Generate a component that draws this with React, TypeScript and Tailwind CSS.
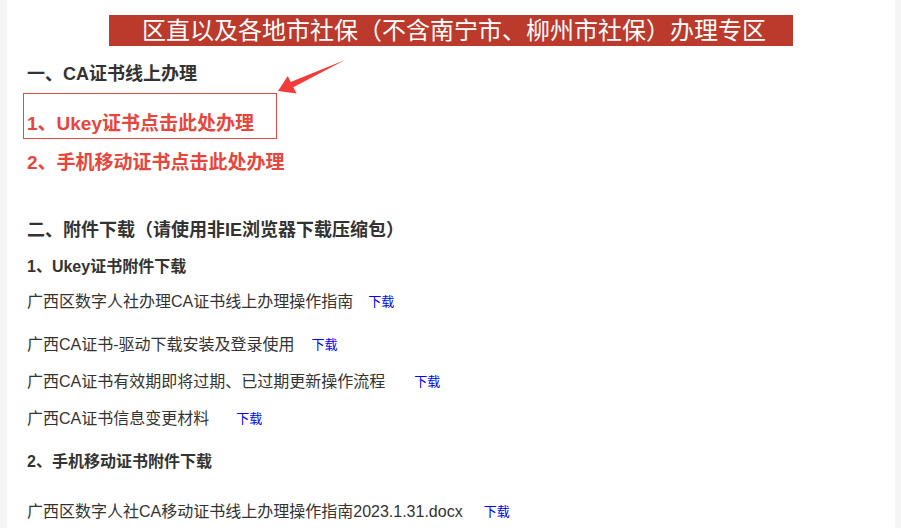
import React from 'react';

const font = { fontFamily: '"Liberation Sans", "Noto Sans CJK SC", sans-serif' };

type FileRow = { name: string; gap: string; mt: string };

const ukeyFiles: FileRow[] = [
  { name: '广西区数字人社办理CA证书线上办理操作指南', gap: 'ml-[15px]', mt: 'mt-[11px]' },
  { name: '广西CA证书-驱动下载安装及登录使用', gap: 'ml-[17px]', mt: 'mt-[19px]' },
  { name: '广西CA证书有效期即将过期、已过期更新操作流程', gap: 'ml-[29px]', mt: 'mt-[13px]' },
  { name: '广西CA证书信息变更材料', gap: 'ml-[27px]', mt: 'mt-[13px]' },
];

function FileLine({ name, gap, mt }: FileRow) {
  return (
    <div className={`${mt} flex items-center h-[24px] text-[16px] text-[#333]`}>
      <span>{name}</span>
      <a href="#" className={`${gap} text-[13px] text-[#0000ff]`}>
        下载
      </a>
    </div>
  );
}

function Arrow() {
  return (
    <svg
      className="absolute left-[263px] top-[55px]"
      width="80"
      height="45"
      viewBox="0 0 80 45"
    >
      <polygon
        points="8,36 17.8,21 20.6,27 75,5 23.3,32.2 26.6,38.5"
        fill="#f23b3b"
      />
    </svg>
  );
}

export default function App() {
  return (
    <div className="flex h-[528px] w-full overflow-hidden bg-white" style={font}>
      <div className="w-[7px] shrink-0 bg-[#f5f5f5]" />
      <div className="relative flex-1 pl-[20px] pt-[15px]">
        <div className="ml-[82px] flex h-[31px] w-[684px] items-center justify-center bg-[#bb3a2c] pl-[6px] text-[24px] leading-none text-white">
          区直以及各地市社保（不含南宁市、柳州市社保）办理专区
        </div>

        <div className="mt-[14px] flex h-[28px] items-center text-[18px] font-bold text-[#333]">
          一、CA证书线上办理
        </div>

        <div className="ml-[-4px] mt-[5px] h-[46px] w-[254px] border border-[#e24a43] pl-[3px] pt-[17px]">
          <a href="#" className="flex h-[26px] items-center text-[19px] font-bold text-[#e8453c]">
            1、Ukey证书点击此处办理
          </a>
        </div>

        <a href="#" className="mt-[11px] flex h-[26px] items-center text-[19px] font-bold text-[#e8453c]">
          2、手机移动证书点击此处办理
        </a>

        <div className="mt-[40px] flex h-[28px] items-center text-[18px] font-bold text-[#333]">
          二、附件下载（请使用非IE浏览器下载压缩包）
        </div>

        <div className="mt-[11px] flex h-[24px] items-center text-[16px] font-bold text-[#333]">
          1、Ukey证书附件下载
        </div>

        {ukeyFiles.map((f) => (
          <FileLine key={f.name} {...f} />
        ))}

        <div className="mt-[19px] flex h-[24px] items-center text-[16px] font-bold text-[#333]">
          2、手机移动证书附件下载
        </div>

        <FileLine
          name="广西区数字人社CA移动证书线上办理操作指南2023.1.31.docx"
          gap="ml-[21px]"
          mt="mt-[26px]"
        />

        <Arrow />
      </div>
      <div className="w-[6px] shrink-0 bg-[#f5f5f5]" />
    </div>
  );
}
